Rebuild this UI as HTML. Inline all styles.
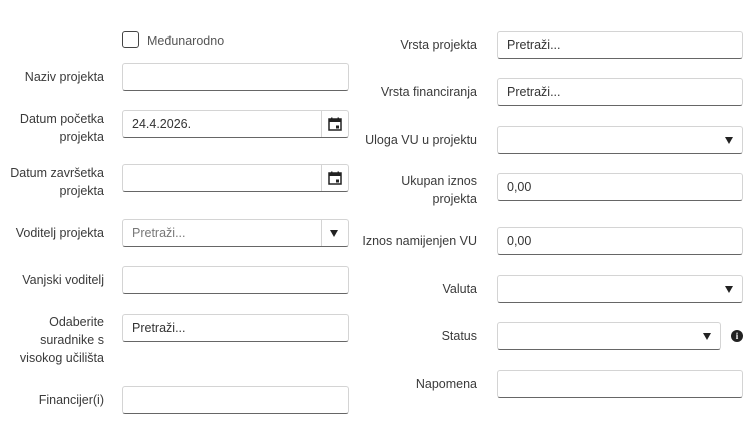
<!DOCTYPE html>
<html><head><meta charset="utf-8"><style>
body{margin:0;width:755px;height:445px;background:#fff;font-family:"Liberation Sans",sans-serif;font-size:12.5px;color:#3a3a3a;position:relative;overflow:hidden}
.l{position:absolute;text-align:right;line-height:18px}
.i{position:absolute;box-sizing:border-box;height:28px;border:1px solid #d4d4d4;border-bottom:1px solid #666;border-radius:3px;background:#fff;padding-left:9px;line-height:26px;font-size:12.5px;color:#333}
.ph{color:#777}
.btn{position:absolute;right:0;top:0;bottom:0;width:26px;border-left:1px solid #d4d4d4}
.tri{position:absolute;width:0;height:0;border-left:4.5px solid transparent;border-right:4.5px solid transparent;border-top:7px solid #222}
</style></head><body>
<div style="position:absolute;left:122px;top:31px;width:15px;height:15px;border:1.5px solid #444;border-radius:3px"></div>
<div style="position:absolute;left:147px;top:32px;color:#555;line-height:18px">Međunarodno</div>

<div class="l" style="right:651px;top:68px">Naziv projekta</div>
<div class="i" style="left:122px;top:63px;width:227px"></div>

<div class="l" style="right:651px;top:110px">Datum početka<br>projekta</div>
<div class="i" style="left:122px;top:110px;width:227px">24.4.2026.<div class="btn"><svg style="position:absolute;left:6px;top:6px" width="14" height="14" viewBox="0 0 14 14"><rect x="1" y="2" width="12" height="11" fill="none" stroke="#222" stroke-width="1.5"/><rect x="1" y="2" width="12" height="3" fill="#222"/><rect x="3" y="0.5" width="1.5" height="3" fill="#222"/><rect x="9.5" y="0.5" width="1.5" height="3" fill="#222"/><rect x="8" y="8.5" width="3" height="3" fill="#222"/></svg></div></div>

<div class="l" style="right:651px;top:164px">Datum završetka<br>projekta</div>
<div class="i" style="left:122px;top:164px;width:227px"><div class="btn"><svg style="position:absolute;left:6px;top:6px" width="14" height="14" viewBox="0 0 14 14"><rect x="1" y="2" width="12" height="11" fill="none" stroke="#222" stroke-width="1.5"/><rect x="1" y="2" width="12" height="3" fill="#222"/><rect x="3" y="0.5" width="1.5" height="3" fill="#222"/><rect x="9.5" y="0.5" width="1.5" height="3" fill="#222"/><rect x="8" y="8.5" width="3" height="3" fill="#222"/></svg></div></div>

<div class="l" style="right:651px;top:224px">Voditelj projekta</div>
<div class="i ph" style="left:122px;top:219px;width:227px">Pretraži...<div class="btn"><div class="tri" style="left:8px;top:10px"></div></div></div>

<div class="l" style="right:651px;top:271px">Vanjski voditelj</div>
<div class="i" style="left:122px;top:266px;width:227px"></div>

<div class="l" style="right:651px;top:313px">Odaberite<br>suradnike s<br>visokog učilišta</div>
<div class="i" style="left:122px;top:314px;width:227px">Pretraži...</div>

<div class="l" style="right:651px;top:391px">Financijer(i)</div>
<div class="i" style="left:122px;top:386px;width:227px"></div>

<div class="l" style="right:278px;top:36px">Vrsta projekta</div>
<div class="i" style="left:497px;top:31px;width:246px">Pretraži...</div>

<div class="l" style="right:278px;top:83px">Vrsta financiranja</div>
<div class="i" style="left:497px;top:78px;width:246px">Pretraži...</div>

<div class="l" style="right:278px;top:131px">Uloga VU u projektu</div>
<div class="i" style="left:497px;top:126px;width:246px"><div class="tri" style="right:9px;top:10px"></div></div>

<div class="l" style="right:278px;top:172px">Ukupan iznos<br>projekta</div>
<div class="i" style="left:497px;top:173px;width:246px">0,00</div>

<div class="l" style="right:278px;top:232px">Iznos namijenjen VU</div>
<div class="i" style="left:497px;top:227px;width:246px">0,00</div>

<div class="l" style="right:278px;top:280px">Valuta</div>
<div class="i" style="left:497px;top:275px;width:246px"><div class="tri" style="right:9px;top:10px"></div></div>

<div class="l" style="right:278px;top:327px">Status</div>
<div class="i" style="left:497px;top:322px;width:224px"><div class="tri" style="right:9px;top:10px"></div></div>
<div style="position:absolute;left:731px;top:330px;width:12px;height:12px;border-radius:50%;background:#222;color:#fff;font:bold 9px/12px 'Liberation Serif',serif;text-align:center">i</div>

<div class="l" style="right:278px;top:375px">Napomena</div>
<div class="i" style="left:497px;top:370px;width:246px"></div>
</body></html>
